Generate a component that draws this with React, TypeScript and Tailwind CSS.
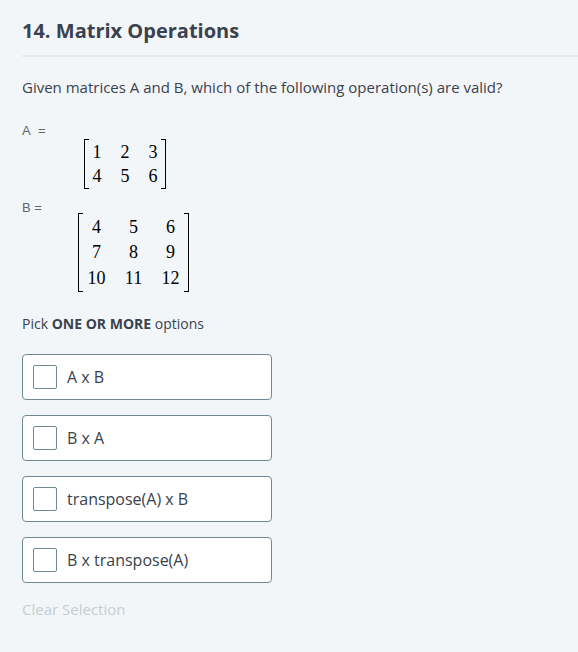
import React from "react";

const Bracket = ({ side }: { side: "l" | "r" }) => (
  <div
    className={
      side === "l"
        ? "w-[5px] self-stretch border-l-[1.5px] border-t-[1.5px] border-b-[1.5px] border-black"
        : "w-[5px] self-stretch border-r-[1.5px] border-t-[1.5px] border-b-[1.5px] border-black"
    }
  />
);

const Matrix = ({ rows, colW, rowH, ml, px, gap }: { rows: string[][]; colW: string; rowH: string; ml: string; px: string; gap: string }) => (
  <div className={`flex ${ml}`}>
    <Bracket side="l" />
    <div className={`flex flex-col ${px} py-[1px]`}>
      {rows.map((r, i) => (
        <div key={i} className={`flex ${gap} ${rowH} items-center`}>
          {r.map((c, j) => (
            <span key={j} className={`${colW} text-center text-[18px] leading-none text-black`} style={{ fontFamily: '"Liberation Serif", "DejaVu Serif", serif' }}>
              {c}
            </span>
          ))}
        </div>
      ))}
    </div>
    <Bracket side="r" />
  </div>
);

const options = ["A x B", "B x A", "transpose(A) x B", "B x transpose(A)"];

export default function App() {
  return (
    <div className="min-h-[652px] w-[578px] bg-[#f3f6f8] pl-[22px] text-[#39424e]" style={{ fontFamily: '"Open Sans", "Noto Sans", sans-serif' }}>
      <div className="pt-[17px]">
        <h1 className="text-[20px] font-bold leading-[28px] text-[#39424e]">14. Matrix Operations</h1>
      </div>
      <div className="mt-[10px] h-[2px] bg-[#e5eaed]" />
      <p className="mt-[19px] text-[15px] leading-[22px] text-[#39424e]">
        Given matrices A and B, which of the following operation(s) are valid?
      </p>
      <div className="mt-[25px] text-[13px] leading-[16px] text-[#5b6770]" style={{ fontFamily: '"Liberation Sans", Arial, sans-serif' }}>
        A&nbsp; =
      </div>
      <div className="mt-[0px]">
        <Matrix ml="ml-[62px]" colW="w-[9px]" gap="gap-[19px]" px="px-[3.5px]" rowH="h-[24px]" rows={[["1", "2", "3"], ["4", "5", "6"]]} />
      </div>
      <div className="mt-[11px] text-[13px] leading-[16px] text-[#5b6770]" style={{ fontFamily: '"Liberation Sans", Arial, sans-serif' }}>
        B =
      </div>
      <div className="-mt-[3px]">
        <Matrix ml="ml-[56px]" colW="w-[19px]" gap="gap-[18px]" px="px-[4px]" rowH="h-[25.5px]" rows={[["4", "5", "6"], ["7", "8", "9"], ["10", "11", "12"]]} />
      </div>
      <p className="mt-[22px] text-[14px] leading-[20px] text-[#39424e]">
        Pick <span className="font-bold">ONE OR MORE</span> options
      </p>
      <div className="mt-[20px] flex flex-col gap-[15px]">
        {options.map((o) => (
          <label key={o} className="flex h-[46px] w-[250px] items-center rounded-[4px] border border-[#6f8a91] bg-white pl-[10px]">
            <span className="h-[24px] w-[24px] rounded-[2px] border border-[#6f8a91] bg-white" />
            <span className="ml-[10px] text-[16px] text-[#39424e]">{o}</span>
          </label>
        ))}
      </div>
      <div className="mt-[16px] text-[15px] leading-[20px] text-[#c2ced2]">Clear Selection</div>
    </div>
  );
}
